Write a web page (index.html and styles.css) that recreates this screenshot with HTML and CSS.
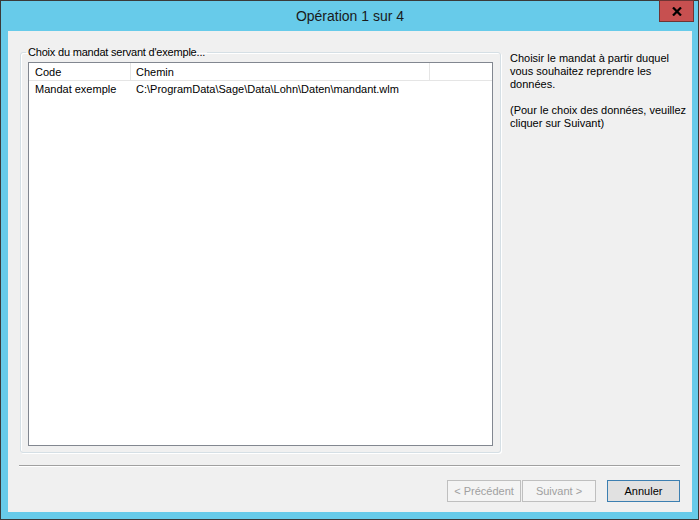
FILE: index.html
```html
<!DOCTYPE html>
<html lang="fr">
<head>
    <meta charset="UTF-8">
    <meta name="viewport" content="width=device-width, initial-scale=1.0">
    <link rel="stylesheet" href="styles.css">
    <title>Opération 1 sur 4</title>
</head>
<body>
    <div class="window">
        <div class="titlebar">
            <span></span>
            <div class="title">Opération 1 sur 4</div>
            <div class="title-actions">
                <button class="close" aria-label="Fermer">
                    <svg width="10" height="9" viewBox="0 0 10 9">
                        <path d="M1 0.5 L9 8.5 M9 0.5 L1 8.5" stroke="#000" stroke-width="2.2" fill="none"/>
                    </svg>
                </button>
            </div>
        </div>
        <div class="content">
            <div class="main">
                <fieldset class="group">
                    <legend>Choix du mandat servant d'exemple...</legend>
                    <div class="list">
                        <div class="list-head">
                            <div class="col col-code">Code</div>
                            <div class="col col-path">Chemin</div>
                        </div>
                        <div class="list-row">
                            <div class="col col-code">Mandat exemple</div>
                            <div class="col col-path">C:\ProgramData\Sage\Data\Lohn\Daten\mandant.wlm</div>
                        </div>
                    </div>
                </fieldset>
                <div class="help">
                    <p>Choisir le mandat à partir duquel<br>vous souhaitez reprendre les<br>données.</p>
                    <p>(Pour le choix des données, veuillez<br>cliquer sur Suivant)</p>
                </div>
            </div>
            <div class="separator"></div>
            <div class="buttons">
                <button class="btn" disabled>&lt; Précédent</button>
                <button class="btn" disabled>Suivant &gt;</button>
                <button class="btn btn-default">Annuler</button>
            </div>
        </div>
    </div>
</body>
</html>
```

FILE: styles.css
```css
body {
    margin: 0;
    padding: 0;
    font-family: "Liberation Sans", Arial, sans-serif;
    font-size: 11px;
    color: #000;
}

.window {
    width: 699px;
    height: 520px;
    box-sizing: border-box;
    border: 1px solid #3a3a3a;
    background-color: #67cbea;
    padding: 0 6px 7px 7px;
    display: flex;
    flex-direction: column;
}

.titlebar {
    height: 30px;
    display: grid;
    grid-template-columns: 1fr auto 1fr;
    align-items: start;
}

.title {
    font-size: 14px;
    line-height: 30px;
    color: #1a1a1a;
}

.title-actions {
    display: flex;
    justify-content: flex-end;
}

.close {
    width: 35px;
    height: 22px;
    margin: -1px -2px 0 0;
    padding: 0;
    border: 1px solid #6e3434;
    background-color: #c75050;
    display: flex;
    align-items: center;
    justify-content: center;
}

.content {
    flex: 1;
    background-color: #f0f0f0;
    padding: 15px 12px 0 12px;
    display: flex;
    flex-direction: column;
}

.main {
    display: flex;
    align-items: flex-start;
}

.group {
    flex-shrink: 0;
    margin: 0;
    width: 481px;
    box-sizing: border-box;
    min-width: 0;
    padding: 3px 7px 6px 7px;
    border: 1px solid #d5dfe5;
    border-radius: 3px;
    box-shadow: inset 1px 1px 0 #fff, 1px 1px 0 #fff;
}

.group legend {
    padding: 0 2px;
    margin-left: -2px;
    line-height: 13px;
    letter-spacing: -0.2px;
}

.list {
    height: 384px;
    box-sizing: border-box;
    border: 1px solid #828790;
    background-color: #fff;
}

.list-head {
    display: flex;
    height: 17px;
    border-bottom: 1px solid #e5e5e5;
}

.list-head .col {
    padding-top: 2px;
    line-height: 15px;
    border-right: 1px solid #e5e5e5;
}

.list-row {
    display: flex;
    height: 17px;
    line-height: 17px;
}

.col {
    box-sizing: border-box;
    white-space: nowrap;
}

.col-code {
    width: 102px;
    padding-left: 6px;
}

.col-path {
    width: 299px;
    padding-left: 5px;
}

.help {
    margin: 6px 0 0 9px;
    line-height: 13px;
    white-space: nowrap;
}

.help p {
    margin: 0 0 13px 0;
}

.separator {
    margin: 12px 0 0 -1px;
    height: 1px;
    background-color: #a0a0a0;
    border-bottom: 1px solid #fff;
}

.buttons {
    margin-top: 13px;
    display: flex;
    justify-content: flex-end;
}

.btn {
    width: 74px;
    height: 22px;
    padding: 0;
    font-family: "Liberation Sans", Arial, sans-serif;
    font-size: 11px;
    font-weight: normal;
    color: #000;
    background-color: #e1e1e1;
    border: 1px solid #adadad;
    margin-left: 1px;
}

.btn:disabled {
    color: #a0a0a0;
    background-color: #f4f4f4;
    border-color: #bfbfbf;
}

.btn-default {
    width: 73px;
    margin-left: 11px;
    border-color: #3c7fb1;
}
```
